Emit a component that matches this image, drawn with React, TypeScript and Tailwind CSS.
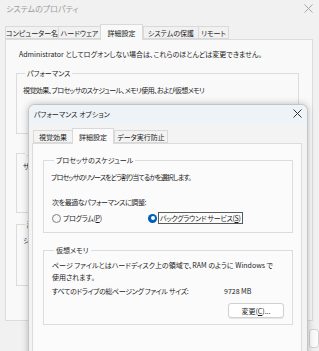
import React from 'react'

// Thin close glyph used in both title bars
const CloseIcon = ({ className = '' }: { className?: string }) => (
  <svg width="9" height="9" viewBox="0 0 9 9" className={className} fill="none" stroke="currentColor" strokeWidth="1">
    <path d="M0.5 0.5l8 8" />
    <path d="M8.5 0.5l-8 8" />
  </svg>
)

type TabProps = { label: string; width: string; selected?: boolean; panelBg: string }

const Tab = ({ label, width, selected, panelBg }: TabProps) => (
  <div
    className={`flex items-center justify-center border border-[#d9d9d9] ${width} ${
      selected ? `h-[16px] border-b-0 -mb-px z-10 ${panelBg}` : 'h-[13px] -mr-px bg-transparent'
    }`}
  >
    <span className="leading-[12px]">{label}</span>
  </div>
)

const Radio = ({ checked }: { checked?: boolean }) =>
  checked ? (
    <span className="flex h-[9px] w-[9px] items-center justify-center rounded-full bg-[#005fb8]">
      <span className="h-[4px] w-[4px] rounded-full bg-white" />
    </span>
  ) : (
    <span className="h-[9px] w-[9px] rounded-full border border-[#808080] bg-[#f7f7f7]" />
  )

export default function App() {
  return (
    <div className="relative h-[351px] w-[319px] overflow-hidden whitespace-nowrap bg-[#f1f1f1] font-['Noto_Sans_CJK_JP','Noto_Sans',sans-serif] text-[7px] text-[#1b1b1b] [font-feature-settings:'palt'_1]">
      {/* システムのプロパティ (inactive window behind) */}
      <div className="flex h-[17px] items-center justify-between pl-[6px] pr-[6px]">
        <span className="text-[8px] leading-[12px] text-[#9c9c9c]">システムのプロパティ</span>
        <CloseIcon className="text-[#a5a5a5]" />
      </div>

      <div className="mt-[7px] flex h-[15px] items-end pl-[5px]">
        <Tab label="コンピューター名" width="w-[54px]" panelBg="bg-[#f9f9f9]" />
        <Tab label="ハードウェア" width="w-[43px]" panelBg="bg-[#f9f9f9]" />
        <Tab label="詳細設定" width="w-[43px]" selected panelBg="bg-[#f9f9f9]" />
        <Tab label="システムの保護" width="w-[56px]" panelBg="bg-[#f9f9f9]" />
        <Tab label="リモート" width="w-[31px]" panelBg="bg-[#f9f9f9]" />
      </div>

      <div className="ml-[5px] h-[282px] w-[308px] border border-[#dcdcdc] bg-[#f9f9f9] pt-[8px]">
        <p className="pl-[13px] leading-[12px]">
          Administrator としてログオンしない場合は、これらのほとんどは変更できません。
        </p>

        <fieldset className="ml-[10px] mt-[8px] h-[66px] w-[283px] border border-[#dcdcdc] pl-[6px]">
          <legend className="ml-[2px] px-[2px] leading-[10px]">パフォーマンス</legend>
          <p className="mt-[6px] leading-[12px] tracking-[-0.6px]">
            視覚効果、プロセッサのスケジュール、メモリ使用、および仮想メモリ
          </p>
        </fieldset>

        <fieldset className="ml-[10px] mt-[14px] h-[65px] w-[283px] border border-[#dcdcdc] pl-[6px]">
          <legend className="ml-[2px] px-[2px] leading-[10px]">ユーザー プロファイル</legend>
          <p className="mt-[2px] leading-[12px]">サインインに関連したデスクトップ設定</p>
        </fieldset>

        <fieldset className="ml-[10px] mt-[6px] h-[67px] w-[283px] border border-[#dcdcdc] pl-[6px]">
          <legend className="ml-[2px] px-[2px] leading-[10px]">起動と回復</legend>
          <p className="mt-[5px] leading-[12px]">システム起動、システム障害およびデバッグ情報</p>
        </fieldset>
      </div>

      <div className="mt-[8px] flex pl-[309px]">
        <div className="h-[19px] w-[60px] rounded-[3px] border border-[#d2d2d2] bg-[#fbfbfb]" />
      </div>

      {/* パフォーマンス オプション (active dialog) */}
      <div className="absolute left-[28px] top-[104px] h-[260px] w-[280px] overflow-hidden rounded-t-[7px] border border-[#c4c4c4] bg-[#f3f3f3] shadow-[0_0_7px_rgba(0,0,0,0.25)]">
        <div className="flex h-[19px] items-center justify-between bg-[#eef3f8] pb-[2px] pl-[5px] pr-[5px]">
          <span className="leading-[12px]">パフォーマンス オプション</span>
          <CloseIcon className="text-[#333333]" />
        </div>

        <div className="mt-[4px] flex h-[15px] items-end pl-[4px]">
          <Tab label="視覚効果" width="w-[40px]" panelBg="bg-[#fbfbfb]" />
          <Tab label="詳細設定" width="w-[42px]" selected panelBg="bg-[#fbfbfb]" />
          <Tab label="データ実行防止" width="w-[54px]" panelBg="bg-[#fbfbfb]" />
        </div>

        <div className="ml-[3px] h-[230px] w-[270px] border border-[#dcdcdc] bg-[#fbfbfb] pt-[11px]">
          <fieldset className="ml-[10px] w-[250px] border border-[#dcdcdc] pb-[8px] pl-[7px]">
            <legend className="ml-[3px] px-[2px] leading-[10px]">プロセッサのスケジュール</legend>
            <p className="mt-[6px] leading-[12px] tracking-[-0.9px]">
              プロセッサのリソースをどう割り当てるかを選択します。
            </p>
            <p className="mt-[13px] pl-[1px] leading-[12px] tracking-[-0.4px]">次を最適なパフォーマンスに調整:</p>
            <div className="mt-[4px] flex h-[12px] items-center pl-[1px]">
              <div className="flex w-[96px] items-center gap-[2px]">
                <Radio />
                <span className="leading-[12px] tracking-[-0.3px]">
                  プログラム(<span className="underline">P</span>)
                </span>
              </div>
              <div className="flex items-center gap-[1px]">
                <Radio checked />
                <span className="border border-[#5a5a5a] px-[1px] leading-[10px] tracking-[-0.3px]">
                  バックグラウンド サービス(<span className="underline">S</span>)
                </span>
              </div>
            </div>
          </fieldset>

          <fieldset className="ml-[10px] mt-[12px] w-[250px] border border-[#dcdcdc] pb-[6px] pl-[8px] pr-[8px]">
            <legend className="ml-[2px] px-[2px] leading-[10px]">仮想メモリ</legend>
            <p className="mt-[4px] leading-[12px]">ページ ファイルとはハードディスク上の領域で、RAM のように Windows で</p>
            <p className="leading-[12px]">使用されます。</p>
            <div className="mt-[2px] flex leading-[12px]">
              <span className="w-[172px] tracking-[-0.35px]">すべてのドライブの総ページング ファイル サイズ:</span>
              <span>9728 MB</span>
            </div>
            <div className="mt-[6px] flex justify-end">
              <button className="flex h-[15px] w-[56px] items-center justify-center rounded-[3px] border border-[#d0d0d0] bg-white leading-[12px] shadow-[0_1px_0_rgba(0,0,0,0.08)]">
                変更(<span className="underline">C</span>)...
              </button>
            </div>
          </fieldset>
        </div>
      </div>
    </div>
  )
}
